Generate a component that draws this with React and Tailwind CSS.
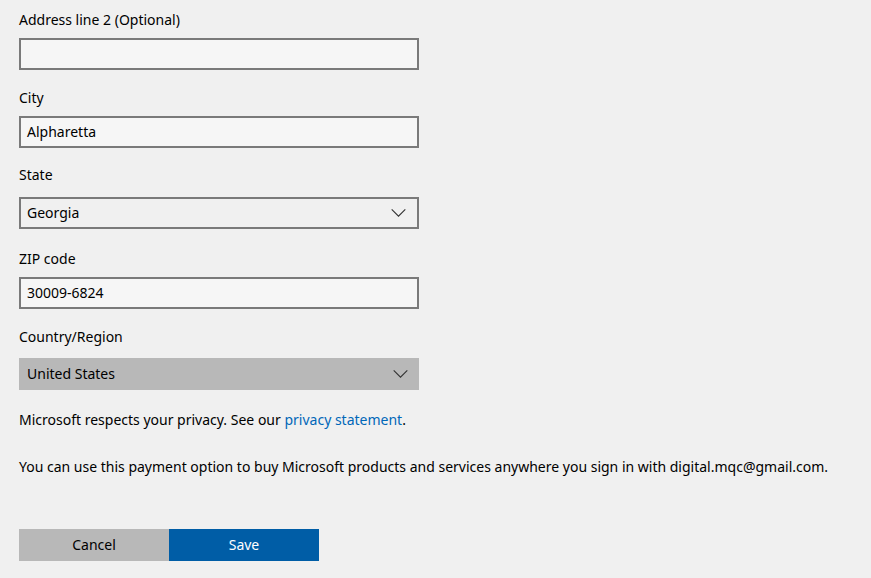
import React from "react";

const font = { fontFamily: '"Noto Sans", "Open Sans", sans-serif' };

function Chevron() {
  return (
    <svg width="15" height="9" viewBox="0 0 15 9" className="absolute right-[11px] top-1/2 -translate-y-1/2">
      <path d="M0.7 0.8 L7.5 7.6 L14.3 0.8" fill="none" stroke="#333" strokeWidth="1.1" />
    </svg>
  );
}

export default function App() {
  return (
    <div className="min-h-[578px] w-[871px] bg-[#f0f0f0] text-black text-[14px] leading-[20px] pl-[19px] pt-[10px]" style={font}>
      <div className="h-[20px]">Address line 2 (Optional)</div>
      <div className="mt-[8px] w-[400px] h-[32px] border-2 border-[#7a7a7a] bg-[#f6f6f6]" />

      <div className="mt-[18px] h-[20px]">City</div>
      <div className="mt-[8px] w-[400px] h-[32px] border-2 border-[#7a7a7a] bg-[#f6f6f6] pl-[6px] flex items-center">Alpharetta</div>

      <div className="mt-[17px] h-[20px]">State</div>
      <div className="relative mt-[12px] w-[400px] h-[32px] border-2 border-[#7a7a7a] bg-[#f0f0f0] pl-[6px] flex items-center">
        Georgia
        <Chevron />
      </div>

      <div className="mt-[20px] h-[20px]">ZIP code</div>
      <div className="mt-[8px] w-[400px] h-[32px] border-2 border-[#7a7a7a] bg-[#f6f6f6] pl-[6px] flex items-center">30009-6824</div>

      <div className="mt-[18px] h-[20px]">Country/Region</div>
      <div className="relative mt-[11px] w-[400px] h-[32px] bg-[#b8b8b8] pl-[8px] flex items-center">
        United States
        <Chevron />
      </div>

      <div className="mt-[20px] h-[20px]">
        Microsoft respects your privacy. See our <span className="text-[#0067b8]">privacy statement</span>.
      </div>

      <div className="mt-[27px] h-[20px] whitespace-nowrap">
        You can use this payment option to buy Microsoft products and services anywhere you sign in with digital.mqc@gmail.com.
      </div>

      <div className="mt-[52px] flex">
        <div className="w-[150px] h-[32px] bg-[#b8b8b8] flex items-center justify-center">Cancel</div>
        <div className="w-[150px] h-[32px] bg-[#005da6] text-white flex items-center justify-center">Save</div>
      </div>
    </div>
  );
}
